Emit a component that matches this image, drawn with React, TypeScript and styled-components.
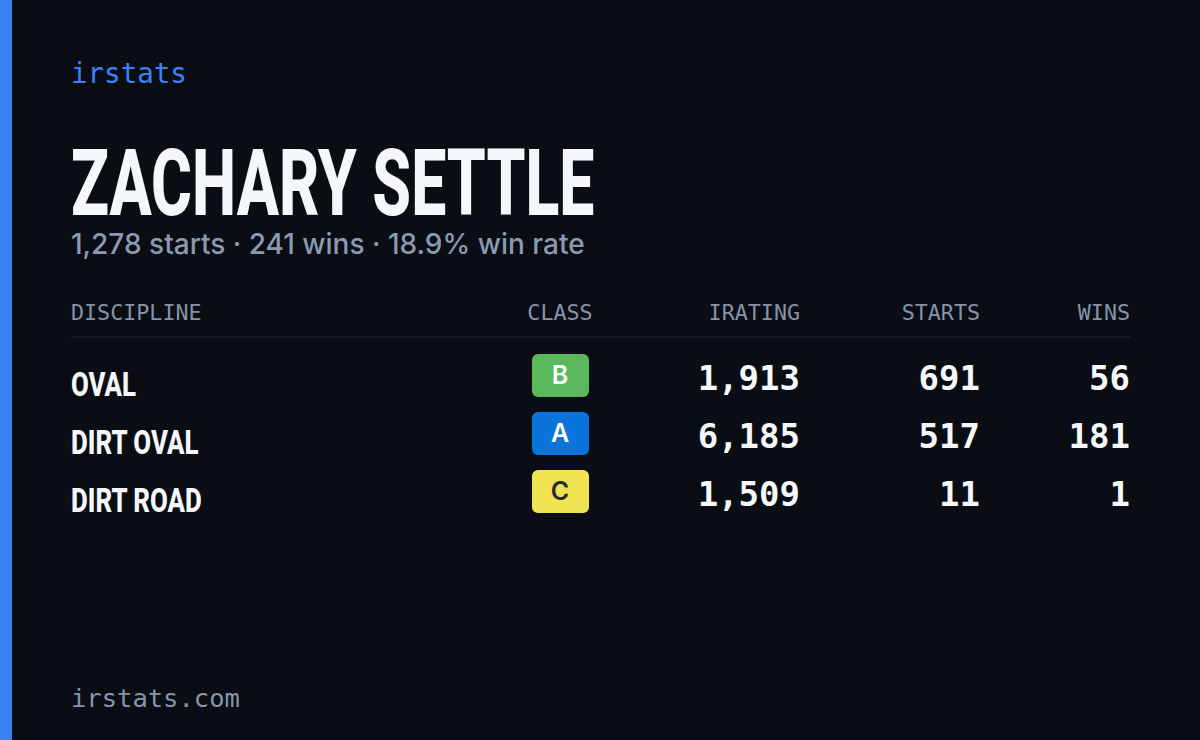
import React from "react";
import styled, { createGlobalStyle } from "styled-components";

const GlobalStyle = createGlobalStyle`
  html, body {
    margin: 0;
    padding: 0;
    background: #0a0d14;
  }
  * { box-sizing: border-box; }
`;

const MONO = `"DejaVu Sans Mono", "Liberation Mono", monospace`;
const COND = `Roboto, "Liberation Sans", sans-serif`;
const SANS = `Inter, "Noto Sans", sans-serif`;

const Page = styled.div`
  display: flex;
  width: 1200px;
  height: 740px;
  background: #0a0d14;
  overflow: hidden;
`;

const AccentBar = styled.div`
  width: 12px;
  flex-shrink: 0;
  background: #3b82f6;
`;

const Content = styled.main`
  flex: 1;
  display: flex;
  flex-direction: column;
  padding: 60px 70px 29px 59px;
`;

const Logo = styled.div`
  font-family: ${MONO};
  font-size: 27.5px;
  line-height: 27px;
  color: #3b82f6;
`;

const Name = styled.h1`
  margin: 53px 0 0;
  font-family: ${COND};
  font-weight: 800;
  font-size: 93px;
  line-height: 88px;
  color: #f5f7fa;
  white-space: nowrap;
`;

const Squeeze = styled.span<{ $x: number }>`
  display: inline-block;
  transform: scaleX(${(p) => p.$x});
  transform-origin: left center;
`;

const Subtitle = styled.p`
  margin: 2px 0 0;
  font-family: ${SANS};
  font-weight: 500;
  font-size: 28px;
  line-height: 28px;
  color: #8b9ab1;
`;

const Table = styled.section`
  margin-top: 44px;
  display: flex;
  flex-direction: column;
`;

const GridRow = styled.div`
  display: grid;
  grid-template-columns: 1fr 100px 190px 180px 150px;
  align-items: center;
`;

const HeaderRow = styled(GridRow)`
  padding-bottom: 13px;
  border-bottom: 2px solid #161a24;
`;

const HeadCell = styled.div<{ $align: "left" | "center" | "right" }>`
  font-family: ${MONO};
  font-size: 21.7px;
  line-height: 21px;
  color: #8593a8;
  text-align: ${(p) => p.$align};
`;

const Body = styled.div`
  padding-top: 8px;
  display: flex;
  flex-direction: column;
`;

const DataRow = styled(GridRow)`
  height: 58px;
`;

const Discipline = styled.div`
  font-family: ${COND};
  font-weight: 800;
  font-size: 34px;
  line-height: 34px;
  color: #f5f7fa;
  padding-top: 18px;
  white-space: nowrap;
`;

const ClassCell = styled.div`
  display: flex;
  justify-content: center;
`;

const Badge = styled.div<{ $bg: string; $fg: string }>`
  width: 57px;
  height: 43px;
  border-radius: 6px;
  background: ${(p) => p.$bg};
  color: ${(p) => p.$fg};
  display: flex;
  align-items: center;
  justify-content: center;
  font-family: ${SANS};
  font-weight: 600;
  font-size: 25px;
  line-height: 1;
`;

const Num = styled.div`
  font-family: ${MONO};
  font-weight: 700;
  font-size: 34px;
  line-height: 34px;
  padding-top: 6px;
  color: #f5f7fa;
  text-align: right;
`;

const Footer = styled.footer`
  margin-top: auto;
  font-family: ${MONO};
  font-size: 25.5px;
  line-height: 25.5px;
  color: #8695ab;
`;

const rows = [
  { name: "OVAL", cls: "B", bg: "#5cb85c", fg: "#ffffff", ir: "1,913", starts: "691", wins: "56" },
  { name: "DIRT OVAL", cls: "A", bg: "#0a74da", fg: "#ffffff", ir: "6,185", starts: "517", wins: "181" },
  { name: "DIRT ROAD", cls: "C", bg: "#efe352", fg: "#2b2b2b", ir: "1,509", starts: "11", wins: "1" },
];

export default function App() {
  return (
    <>
      <GlobalStyle />
      <Page>
        <AccentBar />
        <Content>
          <Logo>irstats</Logo>
          <Name>
            <Squeeze $x={0.672}>ZACHARY SETTLE</Squeeze>
          </Name>
          <Subtitle>1,278 starts · 241 wins · 18.9% win rate</Subtitle>
          <Table>
            <HeaderRow>
              <HeadCell $align="left">DISCIPLINE</HeadCell>
              <HeadCell $align="center">CLASS</HeadCell>
              <HeadCell $align="right">IRATING</HeadCell>
              <HeadCell $align="right">STARTS</HeadCell>
              <HeadCell $align="right">WINS</HeadCell>
            </HeaderRow>
            <Body>
              {rows.map((r) => (
                <DataRow key={r.name}>
                  <Discipline>
                    <Squeeze $x={0.76}>{r.name}</Squeeze>
                  </Discipline>
                  <ClassCell>
                    <Badge $bg={r.bg} $fg={r.fg}>{r.cls}</Badge>
                  </ClassCell>
                  <Num>{r.ir}</Num>
                  <Num>{r.starts}</Num>
                  <Num>{r.wins}</Num>
                </DataRow>
              ))}
            </Body>
          </Table>
          <Footer>irstats.com</Footer>
        </Content>
      </Page>
    </>
  );
}
